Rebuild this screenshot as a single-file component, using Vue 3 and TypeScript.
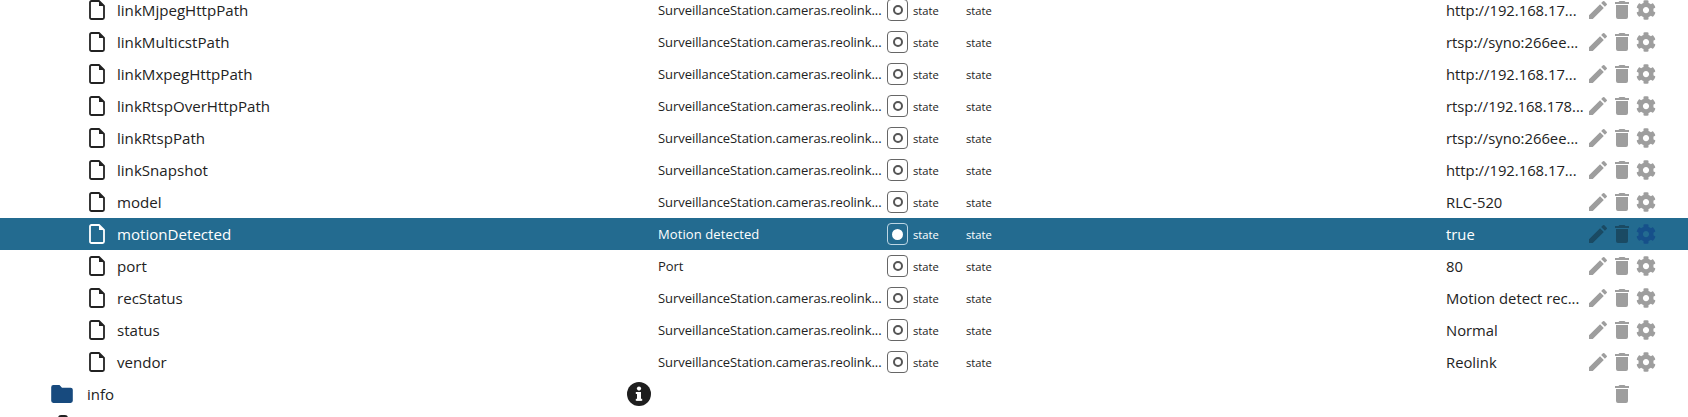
<script setup lang="ts">
interface Row {
  name: string;
  desc: string;
  value: string;
  selected?: boolean;
}
const long = 'SurveillanceStation.cameras.reolink...';
const rows: Row[] = [
  { name: 'linkMjpegHttpPath', desc: long, value: 'http://192.168.17...' },
  { name: 'linkMulticstPath', desc: long, value: 'rtsp://syno:266ee...' },
  { name: 'linkMxpegHttpPath', desc: long, value: 'http://192.168.17...' },
  { name: 'linkRtspOverHttpPath', desc: long, value: 'rtsp://192.168.178...' },
  { name: 'linkRtspPath', desc: long, value: 'rtsp://syno:266ee...' },
  { name: 'linkSnapshot', desc: long, value: 'http://192.168.17...' },
  { name: 'model', desc: long, value: 'RLC-520' },
  { name: 'motionDetected', desc: 'Motion detected', value: 'true', selected: true },
  { name: 'port', desc: 'Port', value: '80' },
  { name: 'recStatus', desc: long, value: 'Motion detect rec...' },
  { name: 'status', desc: long, value: 'Normal' },
  { name: 'vendor', desc: long, value: 'Reolink' },
];
</script>

<template>
  <div class="tree">
    <div v-for="r in rows" :key="r.name" class="row" :class="{ selected: r.selected }">
      <svg class="file" viewBox="0 0 16 20">
        <path d="M2.500 1h7.500l5 5v11.500a1.500 1.500 0 0 1-1.500 1.500h-11a1.500 1.500 0 0 1-1.500-1.500v-15a1.500 1.500 0 0 1 1.500-1.500z" fill="none" stroke="currentColor" stroke-width="1.800" stroke-linejoin="round" />
        <path d="M10 1v5h5z" fill="currentColor" />
      </svg>
      <span class="name">{{ r.name }}</span>
      <span class="desc">{{ r.desc }}</span>
      <span class="btn"><i class="dot" /></span>
      <span class="state s1">state</span>
      <span class="state s2">state</span>
      <span class="value">{{ r.value }}</span>
      <span class="actions">
        <svg class="pencil" viewBox="0 0 24 24"><path d="M3 17.250V21h3.750L17.810 9.940l-3.750-3.750L3 17.250zM20.710 7.040a1 1 0 0 0 0-1.410l-2.340-2.340a1 1 0 0 0-1.410 0l-1.830 1.830 3.750 3.750 1.830-1.830z" /></svg>
        <svg class="trash" viewBox="0 0 14 18"><path d="M1 16a2 2 0 0 0 2 2h8a2 2 0 0 0 2-2V4H1v12zM14 1h-3.500l-1-1h-5l-1 1H0v2h14V1z" /></svg>
        <svg class="gear" viewBox="0 0 512 512"><path d="M487.400 315.700l-42.600-24.600c4.300-23.200 4.300-47 0-70.200l42.600-24.600c4.900-2.800 7.100-8.600 5.500-14-11.100-35.600-30-67.800-54.700-94.600-3.800-4.100-10-5.100-14.800-2.300L380.800 110c-17.900-15.400-38.500-27.300-60.800-35.100V25.800c0-5.600-3.900-10.500-9.400-11.700-36.700-8.200-74.300-7.800-109.200 0-5.500 1.200-9.400 6.100-9.400 11.700V75c-22.200 7.900-42.800 19.800-60.800 35.100L88.700 85.500c-4.900-2.800-11-1.900-14.800 2.300-24.700 26.700-43.600 58.900-54.700 94.600-1.700 5.400.6 11.200 5.500 14L67.300 221c-4.300 23.200-4.300 47 0 70.200l-42.600 24.600c-4.900 2.800-7.100 8.600-5.500 14 11.100 35.600 30 67.800 54.700 94.600 3.800 4.100 10 5.100 14.800 2.300l42.600-24.600c17.900 15.400 38.500 27.300 60.800 35.100v49.200c0 5.600 3.900 10.500 9.400 11.700 36.700 8.200 74.300 7.800 109.200 0 5.500-1.200 9.400-6.100 9.400-11.700v-49.200c22.200-7.900 42.800-19.800 60.800-35.100l42.600 24.600c4.900 2.800 11 1.900 14.800-2.300 24.700-26.700 43.600-58.900 54.700-94.600 1.500-5.500-.7-11.300-5.600-14.100zM256 336c-44.100 0-80-35.900-80-80s35.900-80 80-80 80 35.900 80 80-35.900 80-80 80z" /></svg>
      </span>
    </div>

    <div class="row folder-row">
      <svg class="folder" viewBox="0 0 24 20"><path d="M2.400 0h6.800l2.800 3h9.600A2.400 2.400 0 0 1 24 5.400v12.200a2.400 2.400 0 0 1-2.400 2.400H2.400A2.400 2.400 0 0 1 0 17.600V2.400A2.400 2.400 0 0 1 2.400 0z" /></svg>
      <span class="folder-name">info</span>
      <svg class="info" viewBox="0 0 24 24"><circle cx="12" cy="12" r="12" fill="#1e1e1e" /><rect x="10" y="10" width="4" height="8.500" fill="#fff" /><rect x="8.800" y="10" width="4" height="2" fill="#fff" /><rect x="8.800" y="16.800" width="6.400" height="2" fill="#fff" /><circle cx="12" cy="6.600" r="2.100" fill="#fff" /></svg>
      <span class="actions only">
        <svg class="trash" viewBox="0 0 14 18"><path d="M1 16a2 2 0 0 0 2 2h8a2 2 0 0 0 2-2V4H1v12zM14 1h-3.500l-1-1h-5l-1 1H0v2h14V1z" /></svg>
      </span>
    </div>
    <div class="row next-row"><span class="stub" /></div>
  </div>
</template>

<style>
html, body { margin: 0; background: #fff; overflow: hidden; }
</style>

<style scoped>
.tree {
  height: 417px;
  overflow: hidden;
  font-family: "Open Sans", "Noto Sans", sans-serif;
  color: #222;
  margin-top: -6px;
  padding-bottom: 6px;
  box-sizing: content-box;
}
.row {
  height: 32px;
  display: flex;
  align-items: center;
  padding-left: 89px;
  box-sizing: border-box;
  background: #fff;
}
.selected { background: #236b90; color: #fff; }
.file { width: 16px; height: 20px; color: #222; flex: none; margin-right: 12px; }
.selected .file { color: #fff; }
.name { width: 541px; font-size: 15.100px; flex: none; }
.desc { width: 229px; font-size: 13px; white-space: nowrap; flex: none; letter-spacing: -0.060px; }
.selected .desc { letter-spacing: 0.100px; }
.btn {
  width: 21px;
  height: 22px;
  box-sizing: border-box;
  border: 1.500px solid #666;
  border-radius: 4px;
  display: flex;
  align-items: center;
  justify-content: center;
  flex: none;
  margin-right: 5px;
}
.dot { width: 10px; height: 10px; box-sizing: border-box; border: 2px solid #555; border-radius: 50%; }
.selected .btn { border-color: #bcd6e4; }
.selected .dot { width: 11px; height: 11px; background: #fff; border-color: #fff; }
.state { font-size: 11.200px; flex: none; }
.s1 { width: 53px; }
.s2 { width: 480px; }
.value { width: 140px; font-size: 14.800px; white-space: nowrap; flex: none; }
.actions { display: flex; align-items: center; flex: none; fill: #9e9e9e; }
.selected .actions { fill: #1a4a63; }
.pencil { width: 24px; height: 24px; flex: none; }
.trash { width: 14px; height: 18px; flex: none; margin-left: 5px; }
.gear { width: 20px; height: 20px; flex: none; margin-left: 7px; }
.selected .gear { fill: #16508a; }
.folder-row { padding-left: 51px; }
.folder { width: 22px; height: 18px; fill: #174a7e; flex: none; margin-right: 14px; }
.folder-name { width: 540px; font-size: 15px; flex: none; }
.info { width: 24px; height: 24px; flex: none; }
.only { margin-left: 959px; }
.next-row { padding-left: 58px; align-items: flex-start; }
.stub { width: 10px; height: 3px; margin-top: 5px; background: #222; border-radius: 3px 3px 0 0; }
</style>
